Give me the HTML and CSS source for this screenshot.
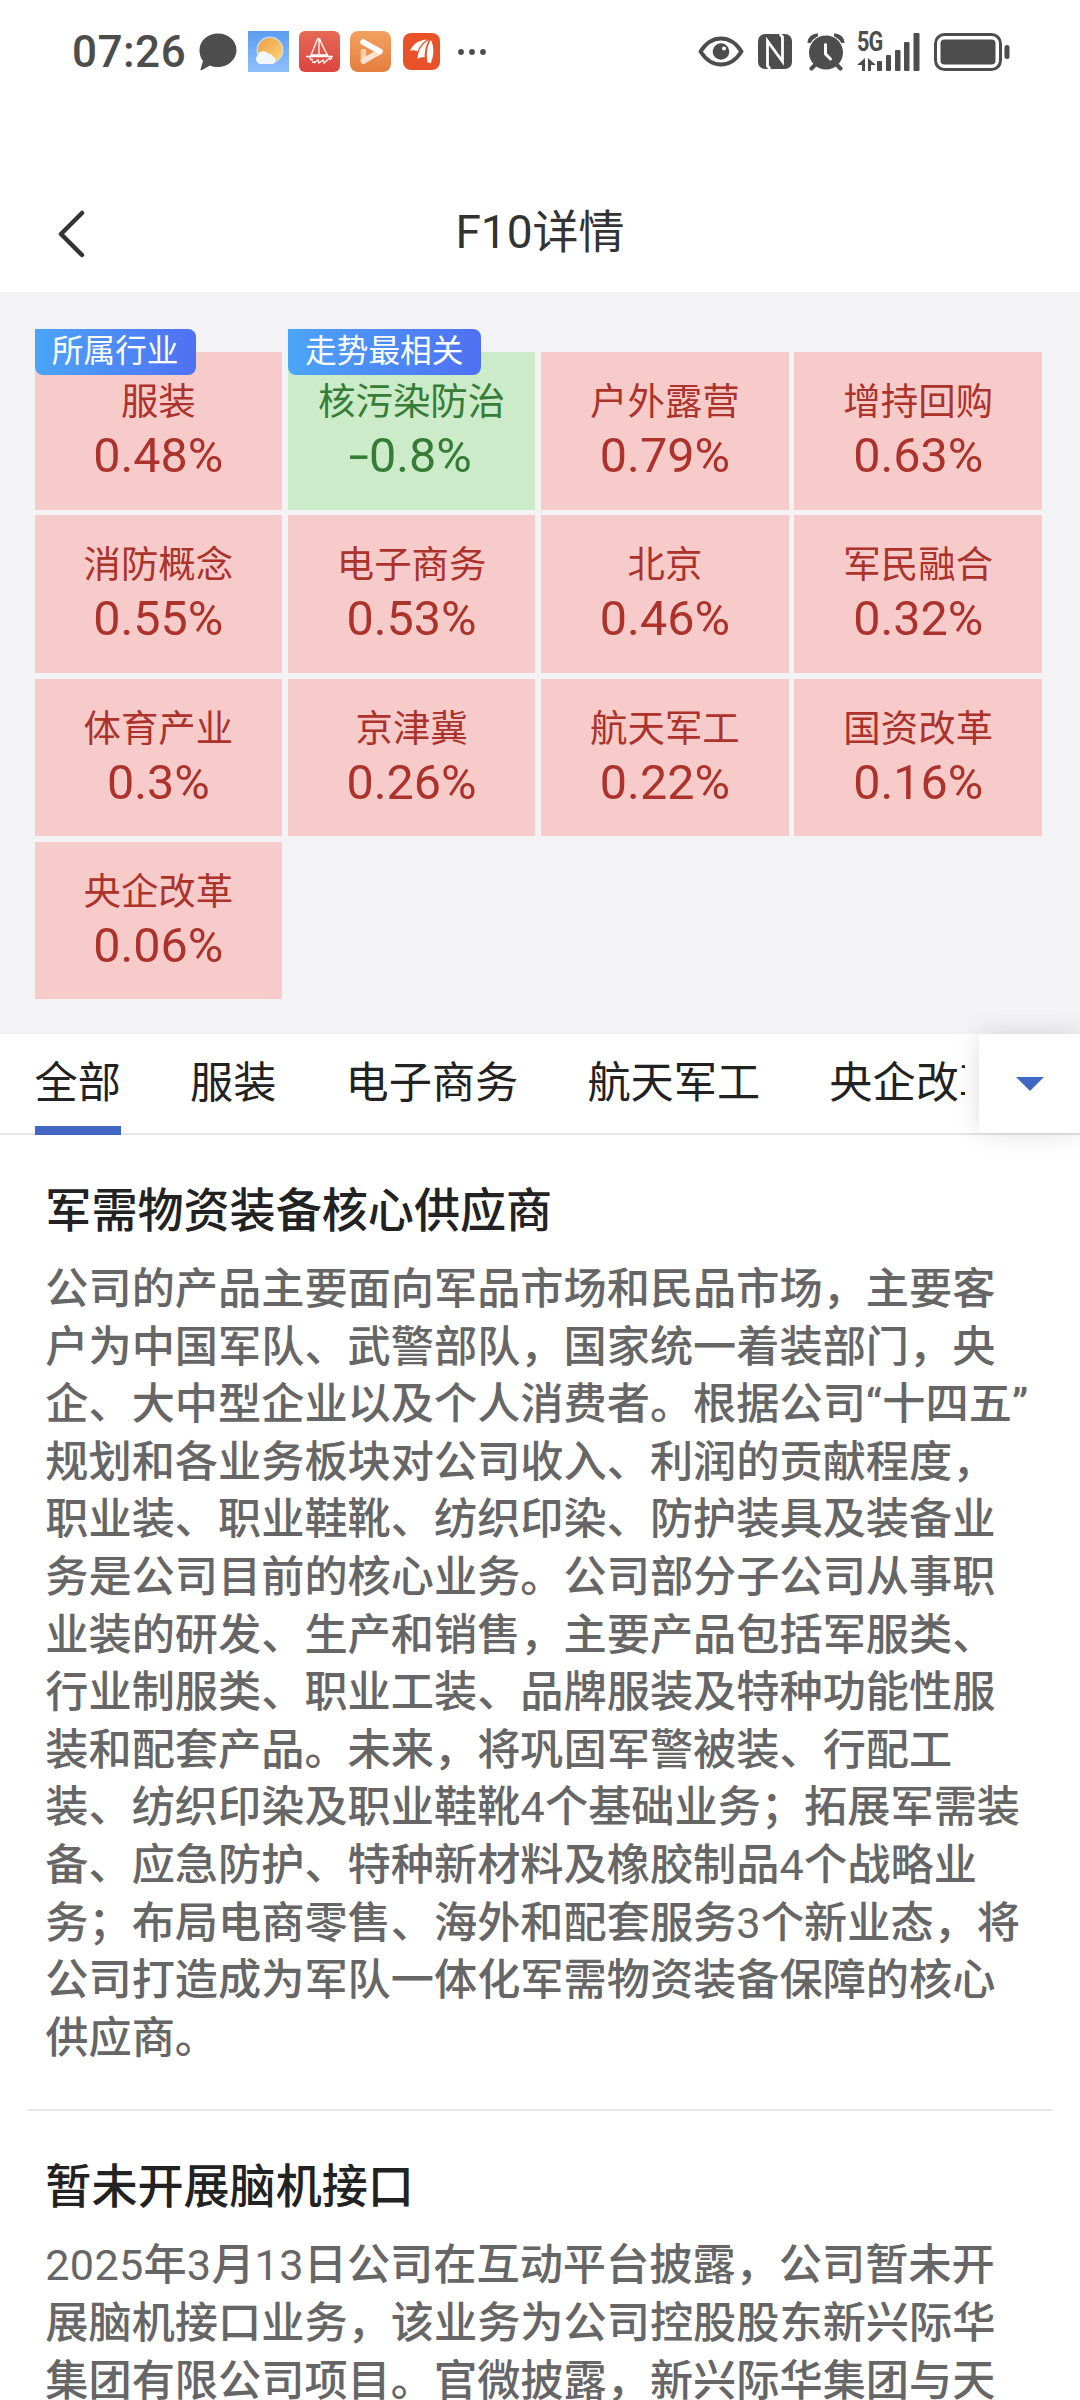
FILE: index.html
```html
<!DOCTYPE html>
<html lang="zh-CN">

<head>
    <meta charset="UTF-8">
    <meta name="viewport" content="width=device-width, initial-scale=1.0">
    <title>F10详情</title>
    <link rel="stylesheet" href="styles.css">
</head>

<body>
    <div class="status-bar">
        <div class="status-left">
            <span class="time">07:26</span>
            <svg class="icon-chat" width="38" height="38" viewBox="0 0 38 38">
                <path fill="#4d4d4d" d="M19 0.5C29 0.5 37.5 7.5 37.5 17S29 34 19 34c-3 0-5.600-.4-8-1.500L3 37c-1.500.6-1.800-.3-1.300-1.300L4 28C1.500 25 .5 21 .5 17 .5 7.500 9 .5 19 .5z" />
            </svg>
            <svg class="icon-app" width="41" height="41" viewBox="0 0 41 41">
                <defs>
                    <linearGradient id="sky" x1="0" y1="0" x2="0" y2="1">
                        <stop offset="0" stop-color="#5b9df0" />
                        <stop offset="1" stop-color="#8fc0f8" />
                    </linearGradient>
                    <linearGradient id="sun" x1="0" y1="0" x2="1" y2="1">
                        <stop offset="0" stop-color="#ec9c45" />
                        <stop offset="1" stop-color="#fbd778" />
                    </linearGradient>
                </defs>
                <rect width="41" height="41" fill="url(#sky)" />
                <circle cx="22" cy="19" r="13.500" fill="#fff3cf" opacity=".65" />
                <circle cx="22" cy="19" r="12" fill="url(#sun)" />
                <path fill="#f2f7fe" d="M13 33a5 5 0 0 1-3.500-8.500 6 6 0 0 1 10.500-2 5 5 0 0 1 5 3.500 3.600 3.600 0 0 1-1 7z" />
            </svg>
            <svg class="icon-app" width="41" height="41" viewBox="0 0 41 41">
                <defs>
                    <linearGradient id="red" x1="0" y1="0" x2="0" y2="1">
                        <stop offset="0" stop-color="#e56a55" />
                        <stop offset="1" stop-color="#de4440" />
                    </linearGradient>
                </defs>
                <rect width="41" height="41" rx="6" fill="url(#red)" />
                <g fill="none" stroke="#fff" stroke-width="1.300">
                    <path d="M20 7v17M19 7L12 24h8M20.500 7.500c2 6 5 11 8 16.500h-8M7 25.500h27M10 25.500l2 3M33 25.500l-2 3.500M11 28.500h3M15 32l4-3 1 3 4-3 1 3 5-4.500h3M13 31h4" />
                </g>
            </svg>
            <svg class="icon-app" width="41" height="41" viewBox="0 0 41 41">
                <defs>
                    <linearGradient id="orange" x1="0" y1="0" x2="0" y2="1">
                        <stop offset="0" stop-color="#f2a262" />
                        <stop offset="1" stop-color="#e57d3d" />
                    </linearGradient>
                </defs>
                <rect width="41" height="41" rx="8" fill="url(#orange)" />
                <g fill="none" stroke-width="5.500" stroke-linecap="round">
                    <path stroke="#f8cdab" d="M13.500 20.500v9" />
                    <path stroke="#fbe3d0" d="M13.500 30l15.500-9" />
                    <path stroke="#fff" d="M13 11l17 9.500" />
                </g>
            </svg>
            <svg class="icon-fire" width="37" height="37" viewBox="0 0 37 37">
                <rect width="37" height="37" rx="8" fill="#e95228" />
                <path fill="#fff" d="M7 18C10 10 17 7 24 6.500 19 10 16 14 14.500 18.500 12 17 9.500 17 7 18zM14.500 26C15 17 19 11 26 7c-3 5-4 10-4.500 17.500-2.500-.5-5 0-7 1.500zM24.500 29.500C23 21 24 13 28 7c3 6 3.500 16-.500 23.500-.8-.8-2-1-3-1z" />
            </svg>
            <svg class="icon-more" width="30" height="8" viewBox="0 0 30 8" fill="#4d4d4d">
                <circle cx="4" cy="4" r="2.900" />
                <circle cx="15" cy="4" r="2.900" />
                <circle cx="26" cy="4" r="2.900" />
            </svg>
        </div>
        <div class="status-right">
            <svg class="icon-eye" width="46" height="31" viewBox="0 0 46 31">
                <path fill="none" stroke="#4d4d4d" stroke-width="4" stroke-linejoin="round" d="M2.500 15.500C8 7 15 2.500 23 2.500S38 7 43.500 15.500C38 24 31 28.500 23 28.500S8 24 2.500 15.500z" />
                <circle cx="23" cy="15.500" r="8.300" fill="#4d4d4d" />
                <circle cx="26" cy="12.500" r="2" fill="#fff" />
            </svg>
            <svg class="icon-nfc" width="34" height="35" viewBox="0 0 34 35">
                <rect width="34" height="35" rx="7" fill="#4d4d4d" />
                <path fill="none" stroke="#fff" stroke-width="2.800" d="M12 35l-2.500-3V7L24.500 27.500V3L22 0" />
            </svg>
            <svg class="icon-alarm" width="38" height="38" viewBox="0 0 38 38">
                <path fill="none" stroke="#4d4d4d" stroke-width="4.500" d="M2.500 10C3 6 6 3 11 2.500M35.500 10C35 6 32 3 27 2.500" />
                <circle cx="19" cy="19.500" r="18.200" fill="#fff" />
                <path fill="none" stroke="#4d4d4d" stroke-width="4" stroke-linecap="round" d="M9 31l-4.500 4.500M29 31l4.500 4.500" />
                <circle cx="19" cy="19.500" r="17" fill="#4d4d4d" />
                <path fill="none" stroke="#fff" stroke-width="3" stroke-linecap="round" stroke-linejoin="round" d="M18.500 11.500v9.500l5 5" />
            </svg>
            <div class="signal">
                <span class="net">5G</span>
                <svg width="64" height="38" viewBox="0 0 64 38" fill="#4d4d4d">
                    <path d="M8 25v13H5v-6H0zM11 38V25l8 7h-5v6z" />
                    <rect x="20" y="28" width="5" height="10" rx="1" />
                    <rect x="29" y="22" width="5" height="16" rx="1" />
                    <rect x="38" y="17" width="5.500" height="21" rx="1" />
                    <rect x="47" y="9" width="5.500" height="29" rx="1" />
                    <rect x="56.500" y="0" width="6" height="38" rx="1" />
                </svg>
            </div>
            <svg class="icon-battery" width="76" height="38" viewBox="0 0 76 38">
                <rect x="1.500" y="1.500" width="65" height="35" rx="9" fill="none" stroke="#4d4d4d" stroke-width="3" />
                <rect x="6.500" y="6.500" width="55" height="25" rx="4" fill="#4d4d4d" />
                <rect x="70.500" y="12" width="5" height="14" rx="2.500" fill="#4d4d4d" />
            </svg>
        </div>
    </div>

    <div class="navbar">
        <svg class="back" width="28" height="48" viewBox="0 0 28 48">
            <path d="M25 3L4 24l21 21" />
        </svg>
        <h1>F10详情</h1>
    </div>

    <div class="plates">
        <div class="plate up"><em class="tag">所属行业</em><span>服装</span><b>0.48%</b></div>
        <div class="plate down"><em class="tag">走势最相关</em><span>核污染防治</span><b><i>-</i>0.8%</b></div>
        <div class="plate up"><span>户外露营</span><b>0.79%</b></div>
        <div class="plate up"><span>增持回购</span><b>0.63%</b></div>
        <div class="plate up"><span>消防概念</span><b>0.55%</b></div>
        <div class="plate up"><span>电子商务</span><b>0.53%</b></div>
        <div class="plate up"><span>北京</span><b>0.46%</b></div>
        <div class="plate up"><span>军民融合</span><b>0.32%</b></div>
        <div class="plate up"><span>体育产业</span><b>0.3%</b></div>
        <div class="plate up"><span>京津冀</span><b>0.26%</b></div>
        <div class="plate up"><span>航天军工</span><b>0.22%</b></div>
        <div class="plate up"><span>国资改革</span><b>0.16%</b></div>
        <div class="plate up"><span>央企改革</span><b>0.06%</b></div>
    </div>

    <div class="tabs">
        <ul class="tab-list">
            <li class="active">全部</li>
            <li>服装</li>
            <li>电子商务</li>
            <li>航天军工</li>
            <li>央企改革</li>
        </ul>
        <div class="tab-more"></div>
    </div>

    <div class="articles">
        <div class="article">
            <h2>军需物资装备核心供应商</h2>
            <p>公司的产品主要面向军品市场和民品市场，主要客户为中国军队、武警部队，国家统一着装部门，央企、大中型企业以及个人消费者。根据公司“十四五”规划和各业务板块对公司收入、利润的贡献程度，职业装、职业鞋靴、纺织印染、防护装具及装备业务是公司目前的核心业务。公司部分子公司从事职业装的研发、生产和销售，主要产品包括军服类、行业制服类、职业工装、品牌服装及特种功能性服装和配套产品。未来，将巩固军警被装、行配工装、纺织印染及职业鞋靴<span>4</span>个基础业务；拓展军需装备、应急防护、特种新材料及橡胶制品<span>4</span>个战略业务；布局电商零售、海外和配套服务<span>3</span>个新业态，将公司打造成为军队一体化军需物资装备保障的核心供应商。</p>
        </div>
        <div class="article">
            <h2>暂未开展脑机接口</h2>
            <p><span>2025</span>年<span>3</span>月<span>13</span>日公司在互动平台披露，公司暂未开展脑机接口业务，该业务为公司控股股东新兴际华集团有限公司项目。官微披露，新兴际华集团与天</p>
        </div>
    </div>
</body>

</html>
```
FILE: styles.css
```css
* {
    box-sizing: border-box;
    margin: 0;
    padding: 0;
}

html {
    font-size: 28.8px;
}

body {
    width: 1080px;
    height: 2400px;
    overflow: hidden;
    background: #fff;
    color: #222;
    font-family: Roboto, "Noto Sans CJK SC", sans-serif;
}

ul {
    list-style: none;
}

svg {
    display: block;
    flex-shrink: 0;
}

/* 状态栏 */
.status-bar {
    display: flex;
    justify-content: space-between;
    height: 168px;
    padding: 0 70px 0 72px;
}

.status-left,
.status-right {
    display: flex;
    align-items: center;
    height: 103px;
}

.time {
    width: 127px;
    font-size: 44px;
    font-weight: 500;
    letter-spacing: .5px;
    color: #4d4d4d;
}

.icon-chat {
    margin-right: 11px;
}

.icon-app {
    margin-right: 10px;
}

.icon-fire {
    margin: 0 17px 0 2px;
}

.icon-eye {
    margin-right: 14px;
}

.icon-nfc {
    margin-right: 15px;
}

.icon-alarm {
    margin-right: 12px;
}

.signal {
    position: relative;
    margin-right: 13px;
}

.net {
    position: absolute;
    left: 0;
    top: -2px;
    font: bold 27px/23px Roboto, sans-serif;
    color: #4d4d4d;
    letter-spacing: -1px;
    transform: scaleX(.8);
    transform-origin: 0 0;
}

/* 标题栏 */
.navbar {
    position: relative;
    height: 124px;
}

.navbar h1 {
    font-size: 46px;
    font-weight: 400;
    line-height: 128px;
    text-align: center;
    color: #333;
}

.back {
    position: absolute;
    left: 57px;
    top: 42px;
}

.back path {
    fill: none;
    stroke: #333;
    stroke-width: 4.500;
    stroke-linecap: round;
    stroke-linejoin: round;
}

/* 板块涨跌 */
.plates {
    display: grid;
    grid-template-columns: repeat(4, 1fr);
    grid-auto-rows: 157.500px;
    gap: .2rem;
    height: 742px;
    padding: 60px 38px 0 1.200rem;
    background: #f3f3f5;
}

.plate {
    position: relative;
    padding-top: 25px;
    text-align: center;
}

.plate span {
    display: block;
    font-size: 1.300rem;
    line-height: 50px;
}

.plate b {
    display: block;
    font-size: 48.500px;
    font-weight: 400;
    line-height: 58px;
}

.plate i {
    display: inline-block;
    margin-right: 4px;
    font-style: normal;
    transform: scaleX(1.500);
}

.up {
    background: #f8cbcb;
    color: #ab332b;
}

.down {
    background: #cbebc9;
    color: #367c36;
}

.tag {
    position: absolute;
    left: 0;
    top: -23px;
    height: 46px;
    padding: 0 .6rem;
    border-radius: 0 8px 8px 8px;
    background: linear-gradient(to right, #4ba5f8, #4f70f2);
    color: #fff;
    font-size: 1.100rem;
    font-style: normal;
    line-height: 45px;
    white-space: nowrap;
}

/* 标签页 */
.tabs {
    display: flex;
    justify-content: space-between;
    height: 101px;
    border-bottom: 2px solid #e4e4e4;
}

.tab-list {
    display: flex;
    gap: 2.400rem;
    width: 965px;
    height: 101px;
    padding-left: 1.200rem;
    overflow: hidden;
    font-size: 1.500rem;
    line-height: 99px;
    white-space: nowrap;
}

.tab-list li {
    flex-shrink: 0;
}

.tab-list .active {
    border-bottom: 9px solid #4166c3;
}

.tab-more {
    display: flex;
    justify-content: center;
    align-items: center;
    width: 101px;
    background: #fff;
    box-shadow: 0 0 24px rgba(0, 0, 0, .13);
}

.tab-more::before {
    content: '';
    border: 14px solid transparent;
    border-top-color: #4166c3;
    border-bottom: none;
}

/* 正文 */
.article {
    margin: 0 28px;
    padding: 47px 20px 42px 17.300px;
    border-bottom: 2px solid #e4e4e4;
}

.article h2 {
    font-size: 1.600rem;
    font-weight: 500;
    line-height: 58px;
}

.article p {
    margin-top: 21px;
    color: #666;
    font-size: 1.500rem;
    font-weight: 500;
    line-height: 2rem;
}

.article p span {
    font-weight: 400;
    letter-spacing: .3px;
}
```
